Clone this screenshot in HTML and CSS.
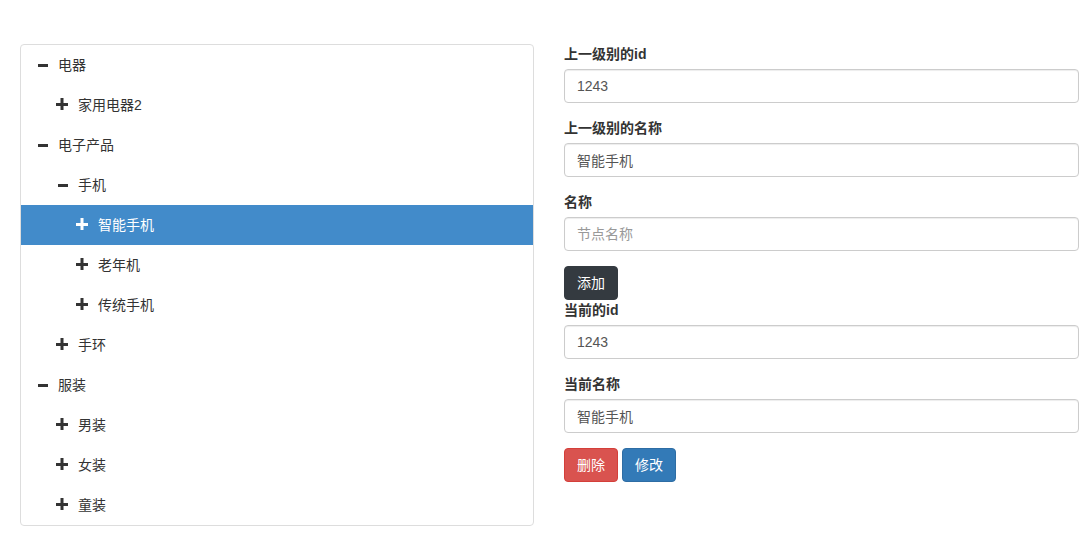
FILE: index.html
```html
<!DOCTYPE html>
<html lang="zh">
<head>
<meta charset="utf-8">
<title>Tree</title>
<link rel="stylesheet" href="styles.css">
</head>
<body>
<div class="page">
  <div class="tree">
    <ul class="tree-list">
      <li class="node lvl1"><svg class="icon" viewBox="0 0 12 12"><rect x="2" y="6" width="10" height="3"/></svg><span>电器</span></li>
      <li class="node lvl2"><svg class="icon" viewBox="0 0 12 12"><rect x="4.5" y="0" width="3" height="12"/><rect x="0" y="5" width="12" height="3"/></svg><span>家用电器2</span></li>
      <li class="node lvl1"><svg class="icon" viewBox="0 0 12 12"><rect x="2" y="6" width="10" height="3"/></svg><span>电子产品</span></li>
      <li class="node lvl2"><svg class="icon" viewBox="0 0 12 12"><rect x="2" y="6" width="10" height="3"/></svg><span>手机</span></li>
      <li class="node lvl3 selected"><svg class="icon" viewBox="0 0 12 12"><rect x="4.5" y="0" width="3" height="12"/><rect x="0" y="5" width="12" height="3"/></svg><span>智能手机</span></li>
      <li class="node lvl3"><svg class="icon" viewBox="0 0 12 12"><rect x="4.5" y="0" width="3" height="12"/><rect x="0" y="5" width="12" height="3"/></svg><span>老年机</span></li>
      <li class="node lvl3"><svg class="icon" viewBox="0 0 12 12"><rect x="4.5" y="0" width="3" height="12"/><rect x="0" y="5" width="12" height="3"/></svg><span>传统手机</span></li>
      <li class="node lvl2"><svg class="icon" viewBox="0 0 12 12"><rect x="4.5" y="0" width="3" height="12"/><rect x="0" y="5" width="12" height="3"/></svg><span>手环</span></li>
      <li class="node lvl1"><svg class="icon" viewBox="0 0 12 12"><rect x="2" y="6" width="10" height="3"/></svg><span>服装</span></li>
      <li class="node lvl2"><svg class="icon" viewBox="0 0 12 12"><rect x="4.5" y="0" width="3" height="12"/><rect x="0" y="5" width="12" height="3"/></svg><span>男装</span></li>
      <li class="node lvl2"><svg class="icon" viewBox="0 0 12 12"><rect x="4.5" y="0" width="3" height="12"/><rect x="0" y="5" width="12" height="3"/></svg><span>女装</span></li>
      <li class="node lvl2"><svg class="icon" viewBox="0 0 12 12"><rect x="4.5" y="0" width="3" height="12"/><rect x="0" y="5" width="12" height="3"/></svg><span>童装</span></li>
    </ul>
  </div>
  <form class="form">
    <div class="form-group">
      <label class="label">上一级别的id</label>
      <input class="input" type="text" value="1243">
    </div>
    <div class="form-group">
      <label class="label">上一级别的名称</label>
      <input class="input" type="text" value="智能手机">
    </div>
    <div class="form-group">
      <label class="label">名称</label>
      <input class="input" type="text" placeholder="节点名称">
    </div>
    <div class="btn-row">
      <button type="button" class="btn btn-dark">添加</button>
    </div>
    <div class="form-group">
      <label class="label">当前的id</label>
      <input class="input" type="text" value="1243">
    </div>
    <div class="form-group">
      <label class="label">当前名称</label>
      <input class="input" type="text" value="智能手机">
    </div>
    <div class="btn-row actions">
      <button type="button" class="btn btn-danger">删除</button>
      <button type="button" class="btn btn-primary">修改</button>
    </div>
  </form>
</div>
</body>
</html>
```

FILE: styles.css
```css
* {
  box-sizing: border-box;
}

html, body {
  margin: 0;
  padding: 0;
  background: #fff;
}

body {
  font-family: "Liberation Sans", "Noto Sans CJK SC", sans-serif;
  font-size: 14px;
  line-height: 20px;
  color: #333;
}

.page {
  display: flex;
  align-items: flex-start;
  gap: 30px;
  padding: 44px 0 0 20px;
}

.tree {
  width: 514px;
  border: 1px solid #ddd;
  border-radius: 4px;
  flex: none;
}

.tree-list {
  list-style: none;
  margin: 0;
  padding: 0;
}

.node {
  display: flex;
  align-items: flex-start;
  height: 40px;
  padding: 10px 15px;
  color: #333;
}

.node.lvl2 {
  padding-left: 35px;
}

.node.lvl3 {
  padding-left: 55px;
}

.node.selected {
  background: #428bca;
  color: #fff;
}

.icon {
  width: 12px;
  height: 12px;
  margin-top: 3px;
  margin-right: 10px;
  fill: currentColor;
  flex: none;
}

.form {
  width: 515px;
  flex: none;
  margin: 0;
}

.form-group {
  margin-bottom: 15px;
}

.label {
  display: inline-block;
  margin-bottom: 5px;
  font-weight: bold;
  color: #333;
}

.input {
  display: block;
  width: 100%;
  height: 34px;
  padding: 6px 12px;
  font-family: inherit;
  font-size: 14px;
  line-height: 20px;
  color: #555;
  background: #fff;
  border: 1px solid #ccc;
  border-radius: 4px;
  box-shadow: inset 0 1px 1px rgba(0, 0, 0, 0.075);
  outline: none;
}

.input::placeholder {
  color: #999;
}

.btn-row {
  display: flex;
  gap: 4px;
}

.btn {
  height: 34px;
  padding: 6px 12px;
  font-family: inherit;
  font-size: 14px;
  line-height: 20px;
  color: #fff;
  border: 1px solid transparent;
  border-radius: 4px;
  cursor: pointer;
}

.btn-dark {
  background: #343a40;
  border-color: #343a40;
}

.btn-danger {
  background: #d9534f;
  border-color: #d43f3a;
}

.btn-primary {
  background: #337ab7;
  border-color: #2e6da4;
}
```
